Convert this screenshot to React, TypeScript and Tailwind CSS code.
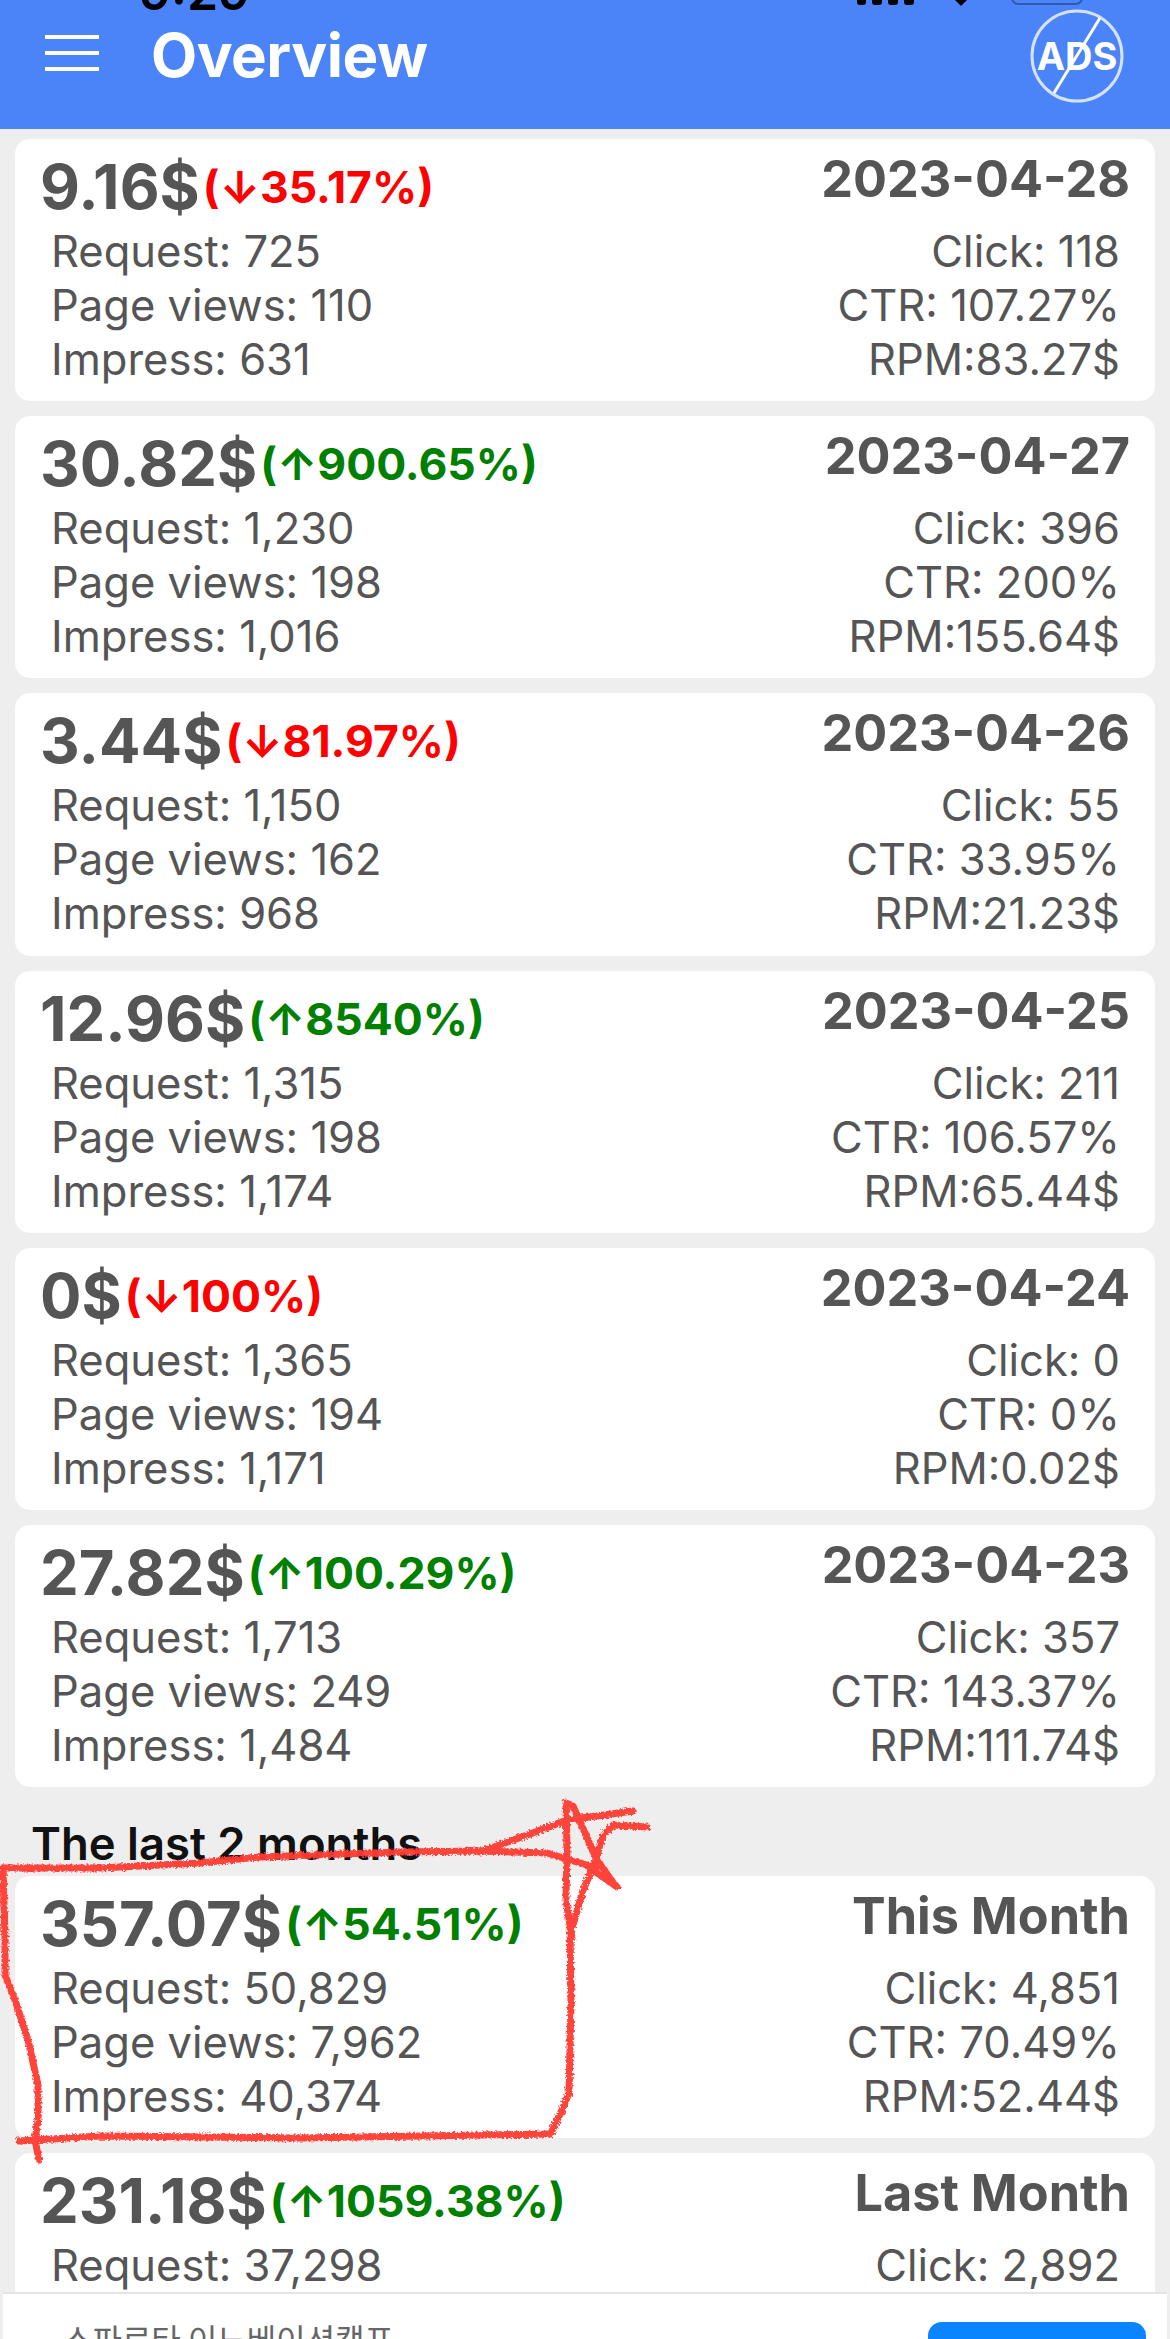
import React from "react";

type Stat = {
  value: string;
  delta: string;
  up: boolean;
  title: string;
  request: string;
  views?: string;
  impress?: string;
  click: string;
  ctr?: string;
  rpm?: string;
};

const days: Stat[] = [
  { value: "9.16$", delta: "(↓35.17%)", up: false, title: "2023-04-28", request: "725", views: "110", impress: "631", click: "118", ctr: "107.27%", rpm: "83.27$" },
  { value: "30.82$", delta: "(↑900.65%)", up: true, title: "2023-04-27", request: "1,230", views: "198", impress: "1,016", click: "396", ctr: "200%", rpm: "155.64$" },
  { value: "3.44$", delta: "(↓81.97%)", up: false, title: "2023-04-26", request: "1,150", views: "162", impress: "968", click: "55", ctr: "33.95%", rpm: "21.23$" },
  { value: "12.96$", delta: "(↑8540%)", up: true, title: "2023-04-25", request: "1,315", views: "198", impress: "1,174", click: "211", ctr: "106.57%", rpm: "65.44$" },
  { value: "0$", delta: "(↓100%)", up: false, title: "2023-04-24", request: "1,365", views: "194", impress: "1,171", click: "0", ctr: "0%", rpm: "0.02$" },
  { value: "27.82$", delta: "(↑100.29%)", up: true, title: "2023-04-23", request: "1,713", views: "249", impress: "1,484", click: "357", ctr: "143.37%", rpm: "111.74$" },
];

// the last card runs off the bottom of the screen, only its first row shows
const months: Stat[] = [
  { value: "357.07$", delta: "(↑54.51%)", up: true, title: "This Month", request: "50,829", views: "7,962", impress: "40,374", click: "4,851", ctr: "70.49%", rpm: "52.44$" },
  { value: "231.18$", delta: "(↑1059.38%)", up: true, title: "Last Month", request: "37,298", click: "2,892" },
];

const StatCard = ({ stat }: { stat: Stat }) => (
  <div className="h-[262.2px] mb-[15px] mx-[15px] bg-white rounded-[15px] pl-[25px] pr-[25px] pt-[8px] text-[#555555] overflow-hidden">
    <div className="flex justify-between items-start h-[77px]">
      <div className="flex items-center mt-[4px]">
        <span className="text-[61.5px] leading-[72px] font-bold">{stat.value}</span>
        <span className={`text-[44.5px] leading-[72px] font-bold ml-[3px] ${stat.up ? "text-[#008000]" : "text-[#ff0000]"}`}>
          {stat.delta}
        </span>
      </div>
      <span className="text-[50.4px] leading-[64px] font-bold">{stat.title}</span>
    </div>
    <div className="flex justify-between pl-[11px] pr-[10px] text-[43.5px] leading-[54px]">
      <div>
        <div>Request: {stat.request}</div>
        {stat.views && <div>Page views: {stat.views}</div>}
        {stat.impress && <div>Impress: {stat.impress}</div>}
      </div>
      <div className="text-right">
        <div>Click: {stat.click}</div>
        {stat.ctr && <div>CTR: {stat.ctr}</div>}
        {stat.rpm && <div>RPM:{stat.rpm}</div>}
      </div>
    </div>
  </div>
);

const AdsBadge = () => (
  <div className="relative w-[94px] h-[94px] flex items-center justify-center">
    <span className="text-white font-bold text-[38px] leading-none">ADS</span>
    <svg className="absolute inset-0" width="94" height="94" viewBox="0 0 94 94" fill="none">
      <circle cx="47" cy="47" r="45" stroke="#d5e2fb" strokeWidth="3" />
      <path d="M70 9 L24 84" stroke="#ffffff" strokeWidth="3" />
    </svg>
  </div>
);

// hand-drawn red marker over the "This Month" card
const Scribble = () => (
  <svg className="absolute left-0 top-[1790px] pointer-events-none" width="680" height="400" viewBox="0 1790 680 400" fill="none">
    <defs>
      <filter id="rough" x="-5%" y="-5%" width="110%" height="110%">
        <feTurbulence type="fractalNoise" baseFrequency="0.45" numOctaves="2" seed="4" />
        <feDisplacementMap in="SourceGraphic" scale="5" />
      </filter>
    </defs>
    <g filter="url(#rough)" stroke="#ff3b30" strokeWidth="7" strokeLinecap="round" strokeLinejoin="round" opacity="0.95">
      <path d="M572 1938 L566 1900 L567 1850 L566 1803 L573 1806 L597 1860 L615 1885 L617 1887 L590 1868" />
      <path d="M3 1868 L100 1868 L200 1863 L260 1857 L400 1852 L480 1851 L547 1853 L590 1866 L596 1870" />
      <path d="M480 1852 L530 1834 L567 1820 L633 1811" />
      <path d="M647 1827 L613 1825 L602 1837 L595 1863 L583 1890 L573 1925" />
      <path d="M570 1930 L571 2000 L569 2093 L562 2110 L551 2133" />
      <path d="M3 1868 L5 1940 L5 1975 L15 2000 L28 2040 L38 2085 L38 2120 L35 2140 L39 2160" />
      <path d="M19 2141 L100 2136 L300 2138 L551 2134" />
    </g>
  </svg>
);

export default function App() {
  return (
    <div className="relative w-[1170px] h-[2339px] overflow-hidden bg-[#eeeeee] [font-family:Inter,sans-serif]">
      <header className="relative h-[129px] bg-[#4a84f8] flex items-start pl-[45px] pr-[46px]">
        {/* cut-off status bar */}
        <span className="absolute left-[139px] top-[-33px] text-[50px] leading-[50px] font-semibold text-black">9:29</span>
        <div className="absolute left-[857px] top-0 flex gap-[6px]">
          <span className="w-[9px] h-[5px] rounded-b-[3px] bg-black" />
          <span className="w-[10px] h-[5px] rounded-b-[3px] bg-black" />
          <span className="w-[10px] h-[5px] rounded-b-[3px] bg-black" />
          <span className="w-[10px] h-[5px] rounded-b-[3px] bg-black" />
        </div>
        <svg className="absolute left-[955px] top-0" width="12" height="6" viewBox="0 0 12 6">
          <path d="M0 0 H12 L6 6 Z" fill="#000000" />
        </svg>
        <div className="absolute left-[1011px] top-[-20px] w-[72px] h-[25px] rounded-[7px] border-[2px] border-[#2d5bb0]" />

        <div className="flex flex-col justify-between w-[54px] h-[36px] mt-[35px]">
          <span className="h-[4px] bg-white" />
          <span className="h-[4px] bg-white" />
          <span className="h-[4px] bg-white" />
        </div>
        <h1 className="ml-[52px] mt-[19px] text-[60px] leading-[72px] font-bold tracking-[-0.5px] text-white">Overview</h1>
        <div className="ml-auto mt-[9px]">
          <AdsBadge />
        </div>
      </header>

      <main className="pt-[10px]">
        {days.map((stat) => (
          <StatCard key={stat.title} stat={stat} />
        ))}
        <div className="h-[74px] pl-[31px] pt-[16px] text-[45.4px] leading-[52px] font-semibold text-[#111111]">
          The last 2 months
        </div>
        {months.map((stat) => (
          <StatCard key={stat.title} stat={stat} />
        ))}
      </main>

      <Scribble />

      {/* bottom ad banner, cut off by the screenshot */}
      <div className="absolute left-[3px] right-[3px] top-[2292px] h-[60px] bg-white border-t-[2px] border-[#e4e4e4] flex items-start pl-[60px] pr-[21px]">
        <span className="mt-[22px] text-[32px] leading-[44px] text-[#666666] [font-family:'Noto_Sans_CJK_KR',sans-serif]">
          스파르타 이노베이션캠프
        </span>
        <div className="ml-auto mt-[28px] w-[218px] h-[60px] rounded-[14px] bg-[#0a84ff]" />
      </div>
    </div>
  );
}
